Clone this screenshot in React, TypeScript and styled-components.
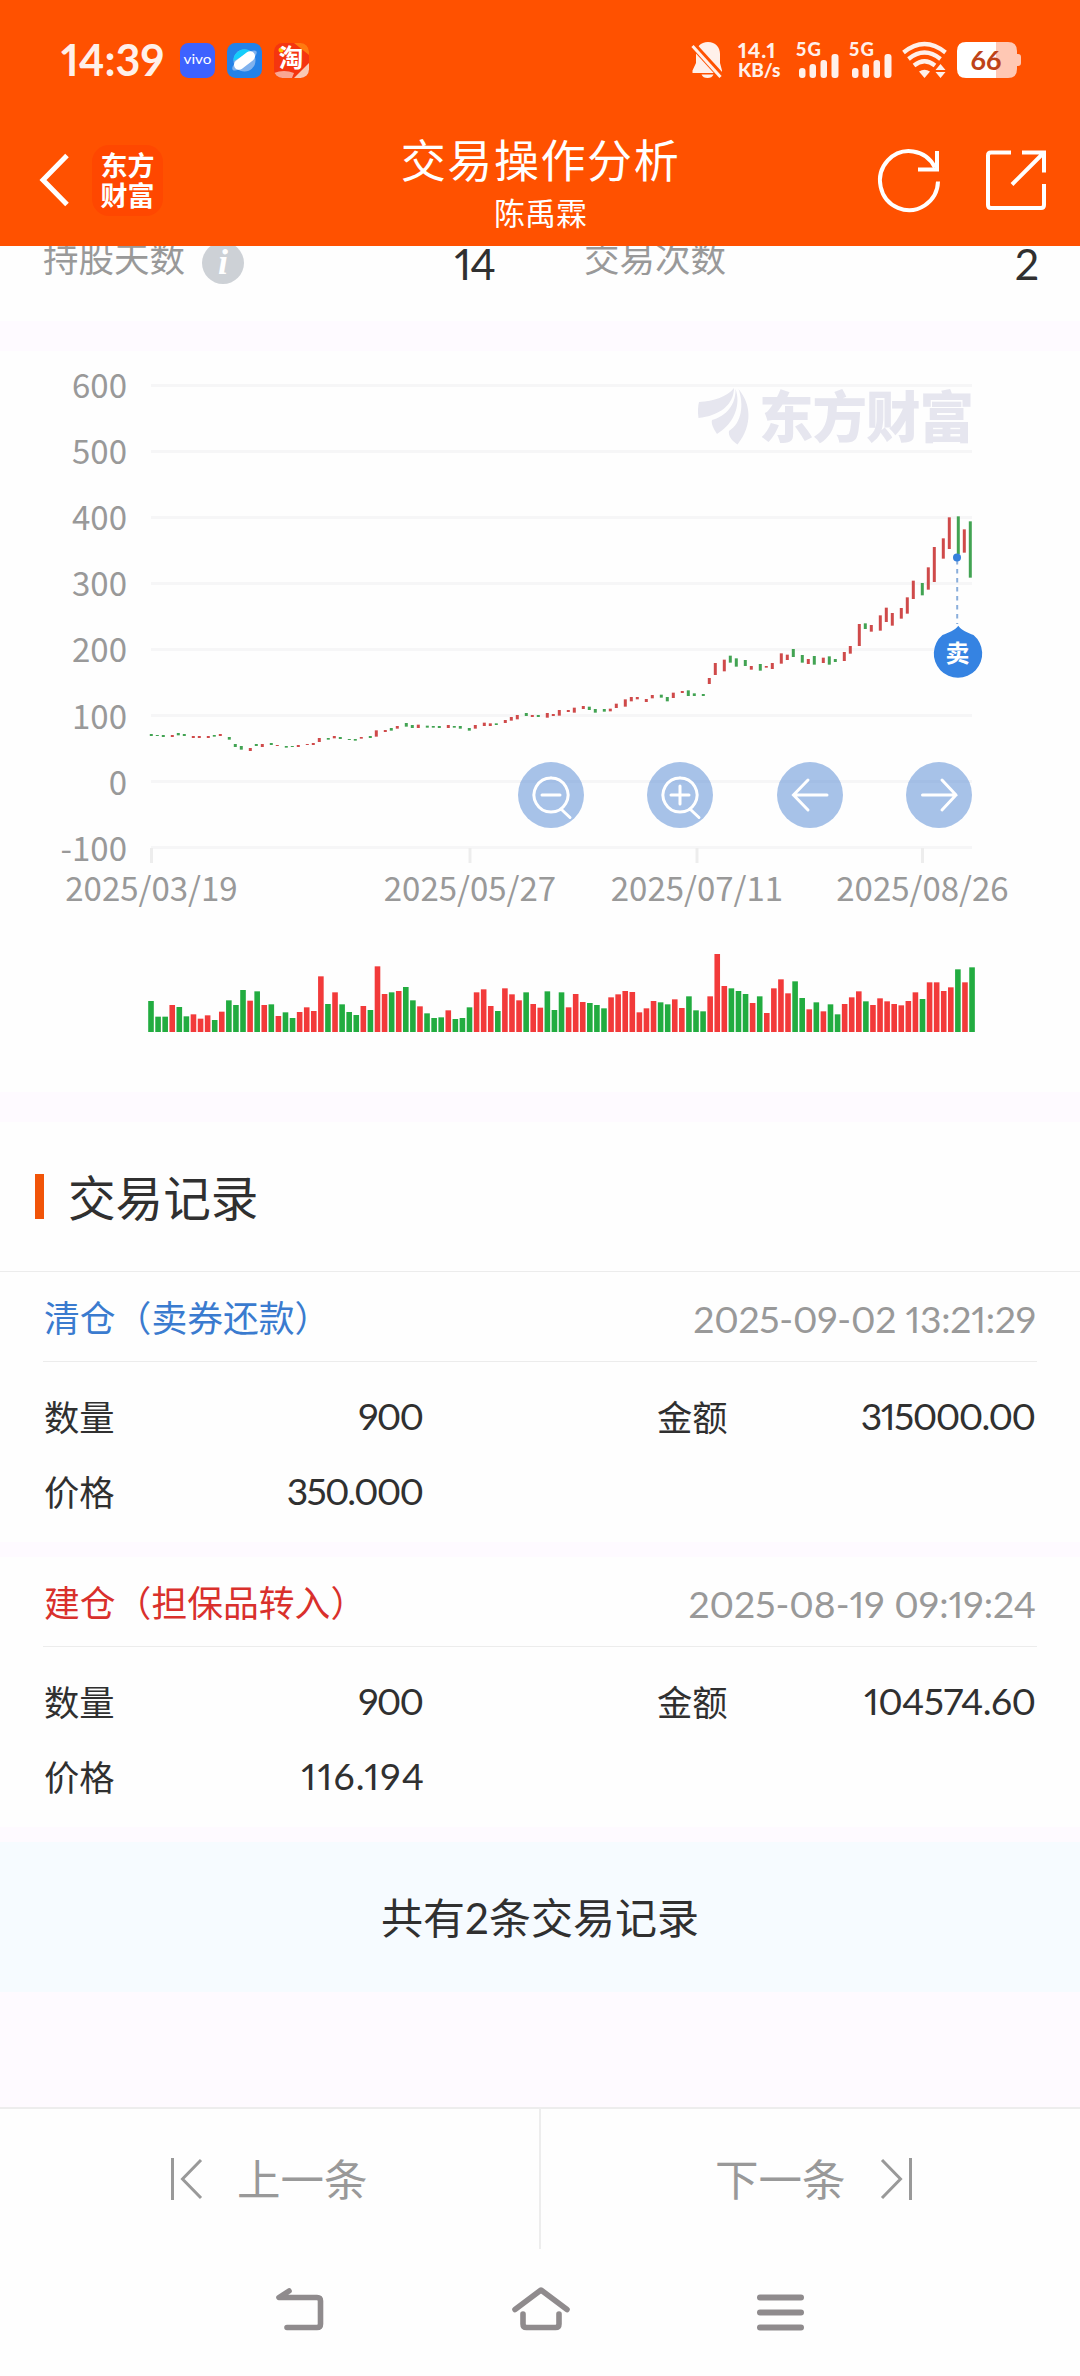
import React from "react";
import styled, { createGlobalStyle } from "styled-components";

const CJK = `"Noto Sans CJK SC", sans-serif`;
const BODY = `Lato, ${CJK}`;
const GREY = "#999999";
const INK = "#303030";
const ORANGE = "#ff5100";
const BAND = "#fefaff";

const GlobalStyle = createGlobalStyle`
  * { box-sizing: border-box; }
  body { margin: 0; background: ${BAND}; }
  svg { overflow: visible; flex: none; }
`;

const Screen = styled.div`
  width: 1080px;
  height: 2376px;
  display: flex;
  flex-direction: column;
  overflow: hidden;
  background: ${BAND};
  color: ${INK};
  font-family: ${BODY};
  font-variant-numeric: proportional-nums;
`;

const Header = styled.header`
  height: 246px;
  flex: none;
  background: ${ORANGE};
  color: #fff;
`;

const StatusBar = styled.div`
  height: 120px;
  padding: 0 59px 0 61px;
  display: flex;
  align-items: center;
  justify-content: space-between;
`;

const StatusGroup = styled.div<{ $gap: number }>`
  display: flex;
  align-items: center;
  gap: ${(p) => p.$gap}px;
`;

const Clock = styled.div`
  width: 107px;
  font-size: 43px;
  line-height: 44px;
  font-weight: 700;
  color: #fff0ea;
  white-space: nowrap;
`;

const NetSpeed = styled.div`
  width: 48px;
  margin-left: 4px;
  display: flex;
  flex-direction: column;
  font-size: 20px;
  line-height: 20px;
  font-weight: 900;
  color: #fff0ea;
  white-space: nowrap;
`;

const NetUnit = styled.span`
  font-size: 19px;
`;

const NetValue = styled.span`
  font-size: 21px;
  letter-spacing: 1px;
`;

const TitleBar = styled.div`
  height: 126px;
  padding: 0 33px 6px 39px;
  display: grid;
  grid-template-columns: 180px 1fr 180px;
  align-items: center;
`;

const BarSide = styled.div<{ $end?: boolean }>`
  display: flex;
  align-items: center;
  gap: ${(p) => (p.$end ? 44 : 23)}px;
  justify-content: ${(p) => (p.$end ? "flex-end" : "flex-start")};
`;

const BrandTile = styled.div`
  width: 71px;
  height: 71px;
  padding-top: 2px;
  border-radius: 17px;
  background: #ff4700;
  display: flex;
  flex-direction: column;
  align-items: center;
  justify-content: center;
  font-size: 27px;
  line-height: 30px;
  font-weight: 700;
`;

const Titles = styled.div`
  display: flex;
  flex-direction: column;
  align-items: center;
  padding: 10px 5px 0 0;
`;

const PageTitle = styled.h1`
  margin: 0;
  font-size: 45px;
  line-height: 56px;
  letter-spacing: 1.6px;
  font-weight: 400;
`;

const PageSubtitle = styled.div`
  font-size: 31px;
  line-height: 48px;
`;

const StatsStrip = styled.section`
  height: 75px;
  flex: none;
  overflow: hidden;
  background: #fefefe;
`;

const StatsRow = styled.div`
  height: 48px;
  margin-top: -17px;
  padding: 0 42px 0 43px;
  display: grid;
  grid-template-columns: 452px 1fr;
  column-gap: 89px;
`;

const Stat = styled.div`
  display: flex;
  align-items: center;
  color: ${GREY};
  font-size: 35.5px;
  line-height: 48px;
`;

const StatValue = styled.span`
  margin-left: auto;
  padding-top: 11px;
  font-size: 43px;
  letter-spacing: -1px;
  color: ${INK};
`;

const InfoDot = styled.span`
  width: 42px;
  height: 42px;
  margin: 8px 0 0 17px;
  border-radius: 50%;
  background: #cdd1d6;
  color: #fff;
  font: italic 700 36px/40px "Liberation Serif", serif;
  text-align: center;
`;

const ChartCard = styled.section`
  position: relative;
  height: 741px;
  flex: none;
  margin-top: 30px;
  background: #fefefe;
`;

const ChartTools = styled.div`
  position: absolute;
  left: 518px;
  top: 411px;
  width: 454px;
  display: flex;
  justify-content: space-between;
`;

const ToolButton = styled.button`
  width: 66px;
  height: 66px;
  padding: 0;
  border: 0;
  border-radius: 50%;
  background: rgba(62, 122, 206, 0.45);
`;

const Records = styled.section`
  flex: none;
  margin-top: 30px;
  display: flex;
  flex-direction: column;
  gap: 15px;
`;

const SectionHead = styled.div`
  height: 149px;
  padding: 0 35px;
  margin-bottom: -15px;
  display: flex;
  align-items: center;
  gap: 24px;
  background: #fefefe;

  &::before {
    content: "";
    width: 9px;
    height: 45px;
    background: #f15408;
  }
`;

const SectionTitle = styled.h2`
  margin: 0;
  padding-top: 3px;
  font-size: 47.6px;
  line-height: 60px;
  font-weight: 400;
`;

const Card = styled.article<{ $ruled?: boolean }>`
  height: ${(p) => (p.$ruled ? 271 : 270)}px;
  padding: 0 43px;
  background: #fefefe;
  border-top: ${(p) => (p.$ruled ? "1px solid #ececec" : "0")};
`;

const CardHead = styled.div`
  height: 90px;
  padding: 4px 1px 0;
  display: flex;
  align-items: center;
  justify-content: space-between;
  border-bottom: 1px solid #ececec;
`;

const Action = styled.span<{ $tone: string }>`
  font-size: 35.8px;
  line-height: 50px;
  color: ${(p) => p.$tone};
`;

const Stamp = styled.time<{ $track: number }>`
  font-size: 37.3px;
  line-height: 50px;
  color: ${GREY};
  letter-spacing: ${(p) => p.$track}px;
  margin-right: ${(p) => -p.$track}px;
`;

const Fields = styled.div`
  padding: 16px 0 0 1px;
  display: grid;
  grid-template-columns: 380px 379px;
  column-gap: 233px;
  grid-auto-rows: 75px;
`;

const Field = styled.div`
  display: flex;
  align-items: center;
  justify-content: space-between;
  font-size: 35.3px;
`;

const FieldValue = styled.span<{ $track: number }>`
  font-size: 37.3px;
  letter-spacing: ${(p) => p.$track}px;
  margin-right: ${(p) => -p.$track}px;
`;

const Summary = styled.div`
  height: 150px;
  padding-bottom: 3px;
  display: flex;
  align-items: center;
  justify-content: center;
  background: #f6fbff;
  font-size: 42px;
`;

const Pager = styled.nav`
  height: 142px;
  flex: none;
  margin-top: 115px;
  display: grid;
  grid-template-columns: 1fr 2px 1fr;
  border-top: 2px solid #ededed;
  background: #fefefe;
`;

const PagerLine = styled.div`
  background: #ededed;
`;

const PagerButton = styled.button<{ $next?: boolean }>`
  border: 0;
  background: none;
  padding: ${(p) => (p.$next ? "0 0 0 174px" : "0 0 0 170px")};
  display: flex;
  align-items: center;
  gap: 33px;
  color: ${GREY};
  font-family: ${BODY};
  font-size: 43.5px;
`;

const PagerLabel = styled.span`
  margin-top: -3px;
`;

const SystemNav = styled.nav`
  flex: 1;
  padding: 0 276px 7px;
  display: flex;
  align-items: center;
  justify-content: space-between;
  background: #fefefe;
`;

/* Body top/bottom of each daily candle in thirds of a pixel, g = down, r = up. */
const CANDLES = (
  "1122-1128g 1125-1128g 1125-1131g 1125-1131r 1119-1126g 1122-1128g 1128-1134r 1128-1134r 1128-1134r 1125-1130g " +
  "1122-1128r 1131-1139g 1152-1161g 1158-1169g 1164-1173r 1152-1158g 1152-1161r 1149-1155g 1155-1158r 1158-1163g " +
  "1158-1161g 1155-1161r 1152-1155r 1149-1155r 1134-1146r 1134-1139g 1128-1135r 1131-1137g 1137-1140g 1137-1142g " +
  "1131-1136r 1128-1134g 1111-1130r 1110-1116r 1104-1112g 1098-1106r 1089-1100g 1095-1104g 1094-1104r 1097-1103g " +
  "1098-1103g 1098-1104g 1095-1104r 1098-1103g 1098-1106g 1104-1112g 1095-1106r 1088-1098r 1090-1098r 1090-1095g " +
  "1080-1089r 1071-1082r 1065-1078r 1059-1068g 1065-1071r 1065-1071g 1059-1073r 1062-1068r 1050-1067r 1050-1056r " +
  "1043-1058r 1038-1047r 1040-1050g 1047-1058g 1047-1055g 1046-1054r 1031-1044r 1018-1040r 1011-1024r 1011-1018r " +
  "1017-1026r 1005-1015r 1004-1013g 1011-1024g 998-1014r 993-999r 991-1008g 1000-1008g 1002-1008g 954-972r " +
  "909-945r 899-934r 887-908g 895-920g 900-918g 918-929r 912-932g 918-923r 909-927r 880-911r " +
  "884-900r 867-891g 885-908g 897-912r 888-914g 893-909r 889-914g 897-906g 876-903r 858-881r " +
  "792-858r 790-807g 795-815r 766-812r 743-786r 759-797r 744-776r 712-761r 662-717r 669-706g " +
  "622-689r 561-666r 535-596r 472-567r 469-582g 508-578r 484-653g"
)
  .split(" ")
  .map((s, i) => {
    const [top, bottom] = s.slice(0, -1).split("-").map(Number);
    return {
      x: 149.8 + 3 * Math.floor(0.2 + 2.3585 * i),
      y: 360 + top / 3,
      h: (bottom - top) / 3,
      fill: s.endsWith("g") ? "#42a353" : "#cf4a4a",
    };
  });

/* Turnover bars: top edge in thirds of a pixel above the 306 baseline. */
const VOLUMES = (
  "213g 260g 260g 225r 231g 259g 253r 266r 256r 270g 245r 211g 225g 180g 212r 184g 225r 223g 258r 247g " +
  "264g 246r 232r 243r 139r 222g 187r 223g 246g 255g 228r 240g 109r 192r 187g 183r 171g 211g 229r 250g " +
  "264g 262g 241r 267g 264g 232g 187r 178r 228r 243g 175r 193r 211r 187g 222r 233r 184g 240g 187g 232r " +
  "192r 216r 219g 225g 235g 202r 193r 183r 186r 247r 235r 213r 217g 223g 208r 234r 199g 241g 244g 199r " +
  "72r 168r 175g 183g 192g 219r 199g 249r 175r 148r 190r 154g 204g 238r 217g 244r 223g 253g 222r 202r " +
  "184r 214g 225r 205r 214r 222r 226r 213r 187r 207g 157r 157r 183r 172r 118g 157r 112g"
)
  .split(" ")
  .map((s, i) => {
    const top = parseInt(s, 10);
    return {
      x: 148.2 + i * 7.078,
      y: 930 + top / 3,
      h: (306 - top) / 3,
      fill: s.endsWith("g") ? "#22ac40" : "#f23a3a",
    };
  });

const LEVELS = [600, 500, 400, 300, 200, 100, 0, -100];
const DATES: [number, string][] = [
  [151.5, "2025/03/19"],
  [470, "2025/05/27"],
  [697, "2025/07/11"],
  [922.5, "2025/08/26"],
];

const ChartSvg = styled.svg`
  display: block;
`;

const PriceChart = () => (
  <ChartSvg width="1080" height="741" viewBox="0 351 1080 741">
    {LEVELS.map((v, i) => (
      <g key={v}>
        <rect x="151" y={384 + i * 66} width="821" height="3" fill="#f6f6f7" />
        <text x="127" y={398 + i * 66.1} textAnchor="end" fontFamily={CJK} fontSize="33" fill={GREY}>
          {v}
        </text>
      </g>
    ))}
    {DATES.map(([x, label]) => (
      <g key={label}>
        <rect x={x - 1.5} y="848" width="3" height="15" fill="#ededed" />
        <text x={x} y="901" textAnchor="middle" fontFamily={CJK} fontSize="33" fill={GREY}>
          {label}
        </text>
      </g>
    ))}
    <g fill="#e6e6ef">
      <path d="M699 402 C714 401 727 397 734 388 C734 405 719 416 698.500 418 C697.500 412 698 406 699 402Z" />
      <path d="M735.500 389 C741 404 735 423 717 434 C713 428 711 423 712 420 C726 416 736 405 735.500 389Z" />
      <path d="M738.500 389 C751 404 753 425 737.500 444.500 C732 441 728 436 729 431 C742 423 744 404 738.500 389Z" />
      <text x="759" y="436.500" fontFamily={CJK} fontWeight="900" fontSize="54.500" textLength="215">
        东方财富
      </text>
    </g>
    {CANDLES.map((c, i) => (
      <rect key={i} x={c.x} y={c.y} width="3" height={c.h} fill={c.fill} />
    ))}
    {VOLUMES.map((b, i) => (
      <rect key={i} x={b.x} y={b.y} width="5.600" height={b.h} fill={b.fill} />
    ))}
    <path d="M957.200 560V624" stroke="#8aaedb" strokeWidth="2" strokeDasharray="4.500 4.500" />
    <circle cx="957" cy="557.500" r="4" fill="#3580dc" />
    <path
      d="M958.300 625.800 C961 630 968 633 973.500 635 A24.200 24.200 0 1 1 942.500 635 C948 633 955.500 630 958.300 625.800Z"
      fill="#3583e2"
    />
    <text x="957.500" y="662" textAnchor="middle" fontFamily={CJK} fontWeight="700" fontSize="24" fill="#fff">
      卖
    </text>
  </ChartSvg>
);

const TOOL_PATHS: [string, string][] = [
  ["缩小", "M33 16a17 17 0 1 0 .01 0M24 33h18M43.500 47.500l8.500 8"],
  ["放大", "M33 16a17 17 0 1 0 .01 0M24 33h18M33 24v18M43.500 47.500l8.500 8"],
  ["左移", "M50 33H16.500M31 18L16.500 33L31 48"],
  ["右移", "M16.500 33H50M36 18L50 33L36 48"],
];

const SignalBars = () => (
  <svg width="43" height="36" viewBox="0 0 43 36" fill="#fff0ea">
    <text x="0" y="14" fontFamily={BODY} fontWeight="900" fontSize="18.500" textLength="25">
      5G
    </text>
    <rect x="3" y="26" width="6.500" height="10" rx="3" />
    <rect x="13.500" y="22" width="6.500" height="14" rx="3" />
    <rect x="24.500" y="18" width="6.500" height="18" rx="3" />
    <rect x="35.500" y="12" width="7" height="24" rx="3" />
  </svg>
);

type Figure = { text: string; track: number };

type RecordData = {
  action: string;
  tone: string;
  time: Figure;
  fields: [string, Figure][];
};

const RECORDS: RecordData[] = [
  {
    action: "清仓（卖券还款）",
    tone: "#3a7bcf",
    time: { text: "2025-09-02 13:21:29", track: -0.25 },
    fields: [
      ["数量", { text: "900", track: -1.8 }],
      ["金额", { text: "315000.00", track: -1.5 }],
      ["价格", { text: "350.000", track: -1.8 }],
    ],
  },
  {
    action: "建仓（担保品转入）",
    tone: "#d9302c",
    time: { text: "2025-08-19 09:19:24", track: 0 },
    fields: [
      ["数量", { text: "900", track: -1.8 }],
      ["金额", { text: "104574.60", track: -0.6 }],
      ["价格", { text: "116.194", track: 1.3 }],
    ],
  },
];

export default function App() {
  return (
    <Screen>
      <GlobalStyle />
      <Header>
        <StatusBar>
          <StatusGroup $gap={12}>
            <Clock>14:39</Clock>
            <svg width="35" height="35" viewBox="0 0 35 35">
              <rect width="35" height="35" rx="8.500" fill="#3d62ff" />
              <text x="3.500" y="21" fontFamily={BODY} fontWeight="400" fontSize="13" fill="#fff" textLength="28" lengthAdjust="spacingAndGlyphs">
                vivo
              </text>
            </svg>
            <svg width="35" height="35" viewBox="0 0 35 35">
              <rect width="35" height="35" rx="8.500" fill="#2382e8" />
              <circle cx="17.500" cy="17.500" r="11" fill="#7fb2ee" />
              <path d="M6.500 18A11 11 0 0 1 24 8.500Z" fill="#15cdfb" />
              <ellipse cx="17.500" cy="17.500" rx="15" ry="5" transform="rotate(-38 17.500 17.500)" fill="#7fb2ee" />
              <rect x="5.500" y="12.500" width="24" height="10" rx="5" transform="rotate(-38 17.500 17.500)" fill="#fff" />
            </svg>
            <svg width="35" height="35" viewBox="0 0 35 35">
              <defs>
                <clipPath id="tile">
                  <rect width="35" height="35" rx="8.500" />
                </clipPath>
              </defs>
              <g clipPath="url(#tile)">
                <rect width="35" height="35" fill="#f5350f" />
                <path d="M20 0H35V12Z" fill="#ff7a10" />
                <path d="M20 35L35 20V35Z" fill="#f9c9b4" />
                <path d="M0 30Q10 26 20 30L18 35H0Z" fill="#f9a793" />
                <circle cx="7" cy="7" r="2.500" fill="#ffc400" />
              </g>
              <text x="17" y="24" textAnchor="middle" fontFamily={CJK} fontWeight="700" fontSize="24.500" fill="#fff">
                淘
              </text>
            </svg>
          </StatusGroup>
          <StatusGroup $gap={10}>
            <svg width="33" height="36" viewBox="0 0 33 36">
              <path d="M17 0C9.500 0 5 5 5 12V21L1.500 28.500V31H31V28.500L29 21V12C29 5 24.500 0 17 0Z" fill="#fff0ea" />
              <path d="M10.500 32.500H22.500C21.500 35 19.500 36 16.500 36C13.500 36 11.500 35 10.500 32.500Z" fill="#fff0ea" />
              <path d="M0 1L31 35" stroke={ORANGE} strokeWidth="7" />
              <path d="M1.500 4L29.500 35" stroke="#fff0ea" strokeWidth="3" />
            </svg>
            <NetSpeed>
              <NetValue>14.1</NetValue>
              <NetUnit>KB/s</NetUnit>
            </NetSpeed>
            <SignalBars />
            <SignalBars />
            <svg width="45" height="36" viewBox="0 0 45 36" fill="none" stroke="#fff0ea" strokeWidth="4.200">
              <path d="M1.500 10.500Q22.500 -6.500 43.500 10.500" />
              <path d="M6.500 17Q22.500 4 38.500 17" />
              <path d="M12 23.500Q22.500 15 33 23.500" />
              <path d="M17 29.500Q22.500 26 28 29.500L22.500 36Z" fill="#fff0ea" stroke="none" />
              <path d="M38.500 22L43.500 28H33.500ZM38.500 36L43.500 30H33.500Z" fill="#fff0ea" stroke="none" />
            </svg>
            <svg width="64" height="36" viewBox="0 0 64 36">
              <path d="M39 0H51Q60 0 60 9V12H61Q64 12 64 15V21Q64 24 61 24H60V27Q60 36 51 36H39Z" fill="#ffc8b4" />
              <path d="M9 0H39V36H9Q0 36 0 27V9Q0 0 9 0Z" fill="#fff" />
              <text x="29" y="28" textAnchor="middle" fontFamily={BODY} fontWeight="700" fontSize="27" fill="#be4318">
                66
              </text>
            </svg>
          </StatusGroup>
        </StatusBar>
        <TitleBar>
          <BarSide>
            <svg width="30" height="54" viewBox="0 0 30 54" fill="none" stroke="#fff" strokeWidth="5">
              <path d="M28 2.500L4 27L28 51.500" />
            </svg>
            <BrandTile>
              <span>东方</span>
              <span>财富</span>
            </BrandTile>
          </BarSide>
          <Titles>
            <PageTitle>交易操作分析</PageTitle>
            <PageSubtitle>陈禹霖</PageSubtitle>
          </Titles>
          <BarSide $end>
            <svg width="63" height="64" viewBox="0 0 63 64" fill="none" stroke="#fff" strokeWidth="4">
              <path d="M60 33.500A29 29.500 0 1 1 57 19.500" />
              <path d="M59 3V21.500H40" />
            </svg>
            <svg width="62" height="64" viewBox="0 0 62 64" fill="none" stroke="#fff" strokeWidth="4">
              <path d="M26 4.500H6Q3 4.500 3 7.500V57Q3 60 6 60H56Q59 60 59 57V36" />
              <path d="M37 4.500H59V24.500M59 4.500L27 36.500" />
            </svg>
          </BarSide>
        </TitleBar>
      </Header>

      <StatsStrip>
        <StatsRow>
          <Stat>
            持股天数
            <InfoDot>i</InfoDot>
            <StatValue>14</StatValue>
          </Stat>
          <Stat>
            交易次数
            <StatValue>2</StatValue>
          </Stat>
        </StatsRow>
      </StatsStrip>

      <ChartCard>
        <PriceChart />
        <ChartTools>
          {TOOL_PATHS.map(([label, d]) => (
            <ToolButton key={label} aria-label={label}>
              <svg width="66" height="66" viewBox="0 0 66 66" fill="none" stroke="#fff" strokeWidth="3" strokeLinecap="round">
                <path d={d} />
              </svg>
            </ToolButton>
          ))}
        </ChartTools>
      </ChartCard>

      <Records>
        <SectionHead>
          <SectionTitle>交易记录</SectionTitle>
        </SectionHead>
        {RECORDS.map((r, i) => (
          <Card key={r.time.text} $ruled={i === 0}>
            <CardHead>
              <Action $tone={r.tone}>{r.action}</Action>
              <Stamp $track={r.time.track}>{r.time.text}</Stamp>
            </CardHead>
            <Fields>
              {r.fields.map(([label, value]) => (
                <Field key={label}>
                  {label}
                  <FieldValue $track={value.track}>{value.text}</FieldValue>
                </Field>
              ))}
            </Fields>
          </Card>
        ))}
        <Summary>共有2条交易记录</Summary>
      </Records>

      <Pager>
        <PagerButton>
          <svg width="34" height="42" viewBox="0 0 34 42" fill="none" stroke={GREY} strokeWidth="3">
            <path d="M2.500 0V42M31 2L12.500 21L31 40" />
          </svg>
          <PagerLabel>上一条</PagerLabel>
        </PagerButton>
        <PagerLine />
        <PagerButton $next>
          <PagerLabel>下一条</PagerLabel>
          <svg width="34" height="42" viewBox="0 0 34 42" fill="none" stroke={GREY} strokeWidth="3">
            <path d="M31.500 0V42M3 2L21.500 21L3 40" />
          </svg>
        </PagerButton>
      </Pager>

      <SystemNav>
        <svg width="48" height="44" viewBox="0 0 48 44" fill="none" stroke="#8f8b8d" strokeWidth="5.600" strokeLinecap="round" strokeLinejoin="round">
          <path d="M13 4L3 10.500H41Q44.500 10.500 44.500 14V37Q44.500 40.500 41 40.500H11" />
        </svg>
        <svg width="58" height="44" viewBox="0 0 58 44" fill="none" stroke="#8f8b8d" strokeWidth="5.600" strokeLinecap="round" strokeLinejoin="round">
          <path d="M3 22.500L29 3L55 22.500" />
          <path d="M11 27V37Q11 40.500 14.500 40.500H43.500Q47 40.500 47 37V27" />
        </svg>
        <svg width="47" height="44" viewBox="0 0 47 44" stroke="#8f8b8d" strokeWidth="6" strokeLinecap="round">
          <path d="M3 10.500H44M3 25.500H44M3 40.500H44" />
        </svg>
      </SystemNav>
    </Screen>
  );
}
